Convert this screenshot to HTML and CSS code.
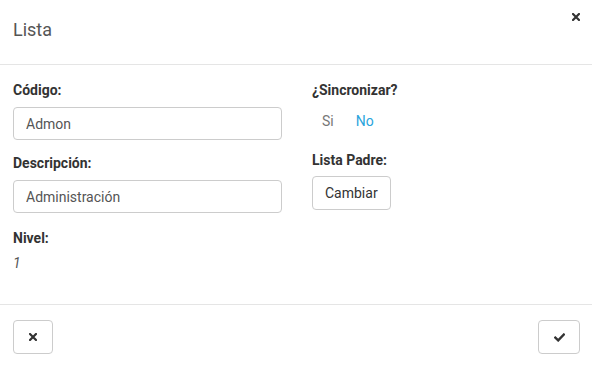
FILE: index.html
```html
<!DOCTYPE html>
<html lang="es">
<head>
<meta charset="utf-8">
<title>Lista</title>
<link rel="stylesheet" href="styles.css">
</head>
<body>
<div class="modal">
  <div class="modal-header">
    <h4 class="modal-title">Lista</h4>
    <button class="close" type="button" aria-label="Cerrar">
      <svg width="8" height="8" viewBox="0 0 8 8"><path d="M1 1L7 7M7 1L1 7" stroke="#333" stroke-width="2.2" stroke-linecap="square"/></svg>
    </button>
  </div>
  <div class="modal-body">
    <div class="col">
      <div class="group">
        <label class="lbl">Código:</label>
        <input class="input" type="text" value="Admon">
      </div>
      <div class="group">
        <label class="lbl">Descripción:</label>
        <input class="input" type="text" value="Administración">
      </div>
      <div class="group">
        <label class="lbl">Nivel:</label>
        <div class="value">1</div>
      </div>
    </div>
    <div class="col">
      <div class="group sync">
        <label class="lbl">¿Sincronizar?</label>
        <div class="toggle">
          <span class="opt">Si</span>
          <span class="opt active">No</span>
        </div>
      </div>
      <div class="group">
        <label class="lbl">Lista Padre:</label>
        <button class="btn btn-change" type="button">Cambiar</button>
      </div>
    </div>
  </div>
  <div class="modal-footer">
    <button class="btn btn-icon" type="button" aria-label="Cancelar">
      <svg width="8" height="8" viewBox="0 0 8 8"><path d="M1 1L7 7M7 1L1 7" stroke="#333" stroke-width="2.2" stroke-linecap="square"/></svg>
    </button>
    <button class="btn btn-icon wide" type="button" aria-label="Aceptar">
      <svg width="11" height="9" viewBox="0 0 11 9"><path d="M1.3 4.6L4.2 7.4L9.8 1.6" fill="none" stroke="#333" stroke-width="2.4" stroke-linecap="square"/></svg>
    </button>
  </div>
</div>
</body>
</html>
```

FILE: styles.css
```css
* { box-sizing: border-box; }
html, body { margin: 0; padding: 0; background: #fff; }
body {
  font-family: Roboto, "Liberation Sans", Arial, sans-serif;
  font-size: 14px;
  line-height: 20px;
  color: #333;
}
.modal { width: 592px; height: 367px; background: #fff; }
.modal-header {
  display: flex;
  justify-content: space-between;
  align-items: flex-start;
  padding: 17px 12px 21px 13px;
  border-bottom: 1px solid #e5e5e5;
}
.modal-title {
  margin: 0;
  font-size: 18px;
  line-height: 26px;
  font-weight: 400;
  color: #555;
}
.close {
  margin-top: -4px;
  padding: 0;
  border: 0;
  background: none;
  width: 8px;
  height: 8px;
  display: flex;
}
.modal-body {
  display: grid;
  grid-template-columns: 269px 1fr;
  column-gap: 30px;
  padding: 15px 13px 0 13px;
  height: 239px;
}
.col { display: flex; flex-direction: column; }
.group { margin-bottom: 13px; }
.group:nth-child(2) { margin-bottom: 15px; }
.lbl {
  display: block;
  font-weight: 700;
  color: #333;
  margin-bottom: 7px;
}
.input {
  display: block;
  width: 100%;
  height: 33px;
  padding: 6px 12px;
  font-family: inherit;
  font-size: 14px;
  color: #555;
  border: 1px solid #ccc;
  border-radius: 4px;
  background: #fff;
}
.value {
  font-style: italic;
  color: #555;
  margin-top: -2px;
}
.toggle { display: flex; gap: 2px; padding-top: 4px; }
.opt { padding: 0 10px; color: #777; }
.opt.active { color: #2aa4dc; }
.group.sync { margin-bottom: 19px; }
.btn {
  display: inline-flex;
  align-items: center;
  justify-content: center;
  height: 34px;
  padding: 6px 12px;
  font-family: inherit;
  font-size: 14px;
  color: #333;
  background: #fff;
  border: 1px solid #ccc;
  border-radius: 4px;
}
.btn-change { margin-top: -1px; }
.modal-footer {
  display: flex;
  justify-content: space-between;
  padding: 15px 12px 0 13px;
  border-top: 1px solid #e5e5e5;
}
.btn-icon { width: 40px; height: 34px; padding: 0; }
.btn-icon.wide { width: 42px; }
```
